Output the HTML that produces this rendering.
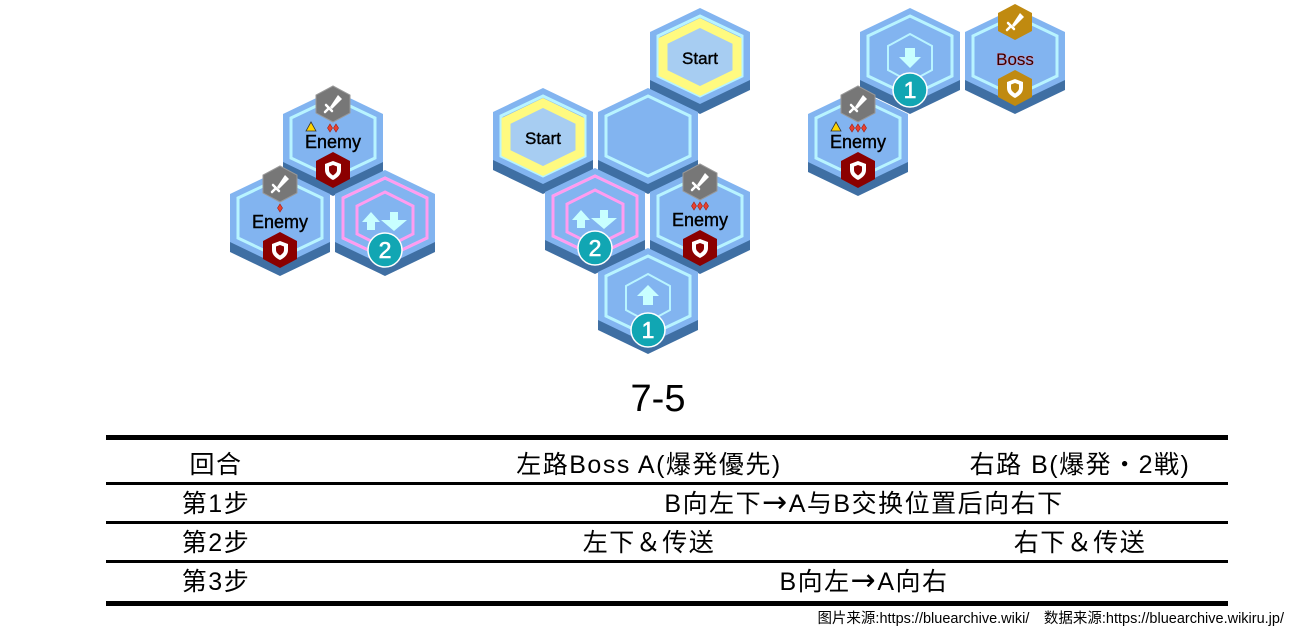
<!DOCTYPE html>
<html><head><meta charset="utf-8"><style>
html,body{margin:0;padding:0;background:#fff;}
svg{display:block;}
</style></head><body>
<svg width="1296" height="641" viewBox="0 0 1296 641" xmlns="http://www.w3.org/2000/svg" font-family="Liberation Sans, Noto Sans CJK SC, sans-serif">
<defs>
<polygon id="face" points="0,-50 50,-26 50,22 0,46 -50,22 -50,-26"/>
<polygon id="inner" points="0,-42 42,-22 42,18 0,38 -42,18 -42,-22"/>
<polygon id="ihex" points="0,-18 17,-9 17,9 0,18 -17,9 -17,-9"/>
<g id="tile">
<use href="#face" y="10" fill="#3f6fa3"/>
<use href="#face" fill="#82b4f0"/>
<use href="#inner" fill="none" stroke="#b8f4ff" stroke-width="3"/>
</g>
<g id="sword"><path d="M5,-9 L9,-5 L-1,5 L-3,3 Z" fill="#fff"/><path d="M-7,1 L-1,7 M-4,4 L-8,8" stroke="#fff" stroke-width="2.5" fill="none" stroke-linecap="round"/></g>
<g id="shield"><path d="M0,-9 L8,-6 L8,0 C8,5 4,8 0,10 C-4,8 -8,5 -8,0 L-8,-6 Z" fill="#fff"/><path d="M0,-5 L4,-3.5 L4,0 C4,2.5 2,4 0,5.5 C-2,4 -4,2.5 -4,0 L-4,-3.5 Z" fill="#8b0000"/></g>
<g id="enemy">
<use href="#ihex" y="-36" fill="#777" stroke="#999" stroke-width="1"/>
<use href="#sword" y="-36"/>
<text x="0" y="8" font-size="18" text-anchor="middle" fill="#000" stroke="#000" stroke-width="0.4">Enemy</text>
<use href="#ihex" y="30" fill="#8b0000"/>
<use href="#shield" y="30"/>
</g>
<g id="tele">
<polygon points="0,-42 42,-22 42,18 0,38 -42,18 -42,-22" fill="none" stroke="#ff9cf0" stroke-width="3"/>
<polygon points="0,-28 28,-14 28,14 0,28 -28,14 -28,-14" fill="none" stroke="#ff9cf0" stroke-width="3"/>
<path d="M-23,2 L-14,-8 L-5,2 L-10,2 L-10,10 L-18,10 L-18,2 Z" fill="#c8ffff"/>
<path d="M5,-6 L13,-6 L13,2 L22,2 L9,13 L-4,2 L5,2 Z" transform="translate(0,-2)" fill="#c8ffff"/>
</g>
<g id="start">
<polygon points="0,-35 37,-17 37,15 0,33 -37,15 -37,-17" fill="#a7cdf2" stroke="#fffa80" stroke-width="9"/>
<text x="0" y="6" font-size="17" text-anchor="middle" fill="#000" stroke="#000" stroke-width="0.4">Start</text>
</g>
<g id="one"><circle r="17" fill="#11a6b3" stroke="#fff" stroke-width="1.5"/><text y="8" font-size="23" text-anchor="middle" fill="#fff" stroke="#fff" stroke-width="0.6">1</text></g>
<g id="two"><circle r="17" fill="#11a6b3" stroke="#fff" stroke-width="1.5"/><text y="8" font-size="23" text-anchor="middle" fill="#fff" stroke="#fff" stroke-width="0.6">2</text></g>
<g id="warn"><path d="M0,-5 L5,4 L-5,4 Z" fill="#ffd400" stroke="#333" stroke-width="0.8"/></g>
<g id="dia"><path d="M0,-4 L2.5,0 L0,4 L-2.5,0 Z" fill="#e84030" stroke="#a02010" stroke-width="0.6"/></g>
</defs>

<g transform="translate(333,140)"><use href="#tile"/><use href="#enemy"/><use href="#warn" x="-22" y="-13"/><use href="#dia" x="-3" y="-12"/><use href="#dia" x="3" y="-12"/></g>
<g transform="translate(280,220)"><use href="#tile"/><use href="#enemy"/><use href="#dia" x="0" y="-12"/></g>
<g transform="translate(385,220)"><use href="#tile"/><use href="#tele"/><use href="#two" y="30"/></g>

<g transform="translate(700,58)"><use href="#tile"/><use href="#start"/></g>
<g transform="translate(543,138)"><use href="#tile"/><use href="#start"/></g>
<g transform="translate(648,138)"><use href="#tile"/></g>
<g transform="translate(595,218)"><use href="#tile"/><use href="#tele"/><use href="#two" y="30"/></g>
<g transform="translate(700,218)"><use href="#tile"/><use href="#enemy"/><use href="#dia" x="-6" y="-12"/><use href="#dia" x="0" y="-12"/><use href="#dia" x="6" y="-12"/></g>
<g transform="translate(648,298)"><use href="#tile"/>
<polygon points="0,-24 22,-12 22,12 0,24 -22,12 -22,-12" fill="none" stroke="#b8f4ff" stroke-width="2"/>
<path d="M-11,-2 L0,-13 L11,-2 L5,-2 L5,7 L-5,7 L-5,-2 Z" fill="#c8ffff"/>
<use href="#one" y="32"/></g>

<g transform="translate(910,58)"><use href="#tile"/>
<polygon points="0,-24 22,-12 22,12 0,24 -22,12 -22,-12" fill="none" stroke="#b8f4ff" stroke-width="2"/>
<path d="M-5,-10 L5,-10 L5,-1 L11,-1 L0,10 L-11,-1 L-5,-1 Z" fill="#c8ffff"/>
<use href="#one" y="32"/></g>
<g transform="translate(1015,58)"><use href="#tile"/>
<use href="#ihex" y="-36" fill="#c08a10"/><use href="#sword" y="-36"/>
<text x="0" y="7" font-size="17" text-anchor="middle" fill="#300" stroke="#e080a0" stroke-width="0.8" paint-order="stroke">Boss</text>
<use href="#ihex" y="30" fill="#c08a10"/>
<g transform="translate(0,30)"><path d="M0,-9 L8,-6 L8,0 C8,5 4,8 0,10 C-4,8 -8,5 -8,0 L-8,-6 Z" fill="#fff"/><path d="M0,-5 L4,-3.5 L4,0 C4,2.5 2,4 0,5.5 C-2,4 -4,2.5 -4,0 L-4,-3.5 Z" fill="#c08a10"/></g>
</g>
<g transform="translate(858,140)"><use href="#tile"/><use href="#enemy"/><use href="#warn" x="-22" y="-13"/><use href="#dia" x="-6" y="-12"/><use href="#dia" x="0" y="-12"/><use href="#dia" x="6" y="-12"/></g>

<text x="658" y="411" font-size="38" text-anchor="middle" fill="#000">7-5</text>

<rect x="106" y="435" width="1122" height="5" fill="#000"/>
<rect x="106" y="482" width="1122" height="3" fill="#000"/>
<rect x="106" y="521" width="1122" height="3" fill="#000"/>
<rect x="106" y="560" width="1122" height="3" fill="#000"/>
<rect x="106" y="601" width="1122" height="5" fill="#000"/>
<g font-size="25" fill="#000" text-anchor="middle" letter-spacing="1.5">
<text x="216" y="473">回合</text>
<text x="649" y="473">左路Boss A(爆発優先)</text>
<text x="1080" y="473">右路 B(爆発・2戦)</text>
<text x="216" y="512">第1步</text>
<text x="864" y="512">B向左下<tspan font-size="30" font-family="DejaVu Sans">→</tspan>A与B交换位置后向右下</text>
<text x="216" y="551">第2步</text>
<text x="649" y="551">左下＆传送</text>
<text x="1080" y="551">右下＆传送</text>
<text x="216" y="590">第3步</text>
<text x="864" y="590">B向左<tspan font-size="30" font-family="DejaVu Sans">→</tspan>A向右</text>
</g>
<text x="1284" y="623" font-size="14.5" text-anchor="end" fill="#000">图片来源:https://bluearchive.wiki/　数据来源:https://bluearchive.wikiru.jp/</text>
</svg>
</body></html>
